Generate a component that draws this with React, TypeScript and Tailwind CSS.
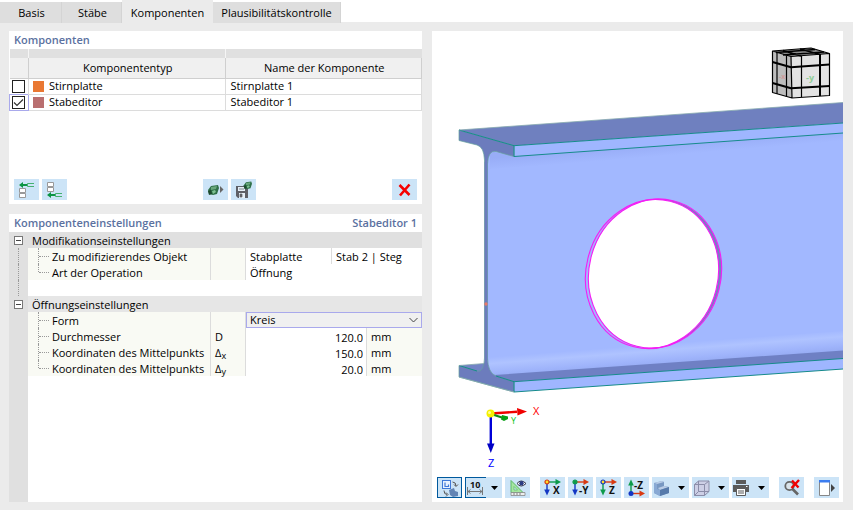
import { useState, type ReactNode } from "react";

type Component = { id: string; type: string; name: string; swatch: string; on: boolean };

const components: Component[] = [
  { id: "stirnplatte", type: "Stirnplatte", name: "Stirnplatte 1", swatch: "bg-[#e97833]", on: false },
  { id: "stabeditor", type: "Stabeditor", name: "Stabeditor 1", swatch: "bg-[#b96f70]", on: true },
];

const tabs = [
  { label: "Basis", width: "w-[62px] pl-0.5" },
  { label: "Stäbe", width: "w-[60px] pl-0.5" },
  { label: "Komponenten", width: "w-[91px]" },
  { label: "Plausibilitätskontrolle", width: "w-32" },
];

function IconButton({ label, children, className = "" }: { label: string; children: ReactNode; className?: string }) {
  return (
    <button
      type="button"
      aria-label={label}
      className={`flex h-[21px] w-[25px] shrink-0 items-center justify-center bg-[#cce4f7] ${className}`}
    >
      {children}
    </button>
  );
}

function MenuButton({ label, children, pressed = false }: { label: string; children: ReactNode; pressed?: boolean }) {
  return (
    <button type="button" aria-label={label} className="flex h-[21px] w-[37px] shrink-0 items-center bg-[#cce4f7]">
      <span className={`flex h-full w-[21px] items-center ${pressed ? "border-y border-l border-[#00599d]" : ""}`}>
        {children}
      </span>
      <svg className="ml-[5px] h-1 w-[7px]" viewBox="0 0 7 4">
        <path d="M0 0h7L3.5 4z" fill="#000" />
      </svg>
    </button>
  );
}

function GreenBlock() {
  return (
    <g>
      <path d="M1 7l3-4 7-1 1 3-2 6-4 1-4-1z" fill="#2f7048" />
      <path d="M4 4l6-1-1 3-5 1z" fill="#69a77c" />
      <path d="M1 8l3-1 1 4-3 1z" fill="#1d4a2e" />
      <path d="M5 8l3-1 1 2-3 2z" fill="#7fc193" />
    </g>
  );
}

function AxisIcon({
  letter,
  down,
  right,
  origin,
  ring,
}: {
  letter: string;
  down: string;
  right: string;
  origin: string;
  ring: string;
}) {
  return (
    <svg className="h-5 w-5 overflow-visible" viewBox="0 0 20 20">
      <path d="M4 4h10" stroke={right} strokeWidth="1.400" />
      <path d="M12.500 1l5.500 3-5.500 3z" fill={right} />
      <path d="M4 4v9" stroke={down} strokeWidth="1.400" />
      <path d="M1.200 11.500h5.600L4 17.500z" fill={down} />
      <circle cx="4" cy="4" r="2" fill={origin} stroke={ring} strokeWidth="1.200" />
      <text x={letter.length > 1 ? 8 : 10} y="15.500" fontSize="10" fontWeight="700" fill="#111">
        {letter}
      </text>
    </svg>
  );
}

function Caret() {
  return (
    <svg className="pointer-events-none col-start-1 row-start-1 mr-1 h-[6px] w-[9px] justify-self-end" viewBox="0 0 9 6">
      <path d="M.5 1l4 4 4-4" fill="none" stroke="#444" />
    </svg>
  );
}

function Branch({ last = false }: { last?: boolean }) {
  return (
    <span className="flex h-4 items-center" aria-hidden="true">
      <span className={`w-px border-l border-dotted border-[#999] ${last ? "h-2 self-start" : "h-4"}`} />
      <span className="w-2.5 border-t border-dotted border-[#999]" />
    </span>
  );
}

function LabelCell({ children, last, htmlFor }: { children: ReactNode; last?: boolean; htmlFor?: string }) {
  return (
    <th scope="row" className="border-r border-[#dcdcdc] bg-[#f9faf4] p-0 text-left font-normal">
      <span className="flex h-4 items-center pl-2.5">
        <Branch last={last} />
        <label htmlFor={htmlFor} className="pt-0.5 pl-[3px] leading-[14px] whitespace-nowrap">
          {children}
        </label>
      </span>
    </th>
  );
}

function TextCell({ children, span = 1, className = "" }: { children?: ReactNode; span?: number; className?: string }) {
  return (
    <td colSpan={span} className={`p-0 pt-0.5 pl-1 leading-[14px] ${className}`}>
      {children}
    </td>
  );
}

function SymbolCell({ children }: { children?: ReactNode }) {
  return <TextCell className="border-r border-[#dcdcdc] bg-[#f9faf4]">{children}</TextCell>;
}

function Section({ title, tone, open, onToggle }: { title: string; tone: string; open: boolean; onToggle: () => void }) {
  return (
    <tr className="h-4">
      <td className="bg-[#e0e0e0] p-0">
        <button
          type="button"
          aria-label={title}
          aria-expanded={open}
          onClick={onToggle}
          className="ml-[5px] flex size-[9px] items-center justify-center border border-[#777] bg-white"
        >
          <span className="h-px w-[5px] bg-[#444]" />
        </button>
      </td>
      <th colSpan={5} scope="colgroup" className={`p-0 pt-0.5 pl-1 text-left leading-[14px] font-normal ${tone}`}>
        {title}
      </th>
    </tr>
  );
}

function Gutter({ line = false }: { line?: boolean }) {
  return (
    <td className="bg-[#e0e0e0] p-0">
      {line && <span className="ml-[9px] block h-4 w-px border-l border-dotted border-[#999]" />}
    </td>
  );
}

function ValueRow({
  id,
  label,
  symbol,
  value,
  last,
}: {
  id: string;
  label: string;
  symbol: ReactNode;
  value: string;
  last?: boolean;
}) {
  return (
    <tr className="h-4">
      <Gutter />
      <LabelCell htmlFor={id} last={last}>
        {label}
      </LabelCell>
      <SymbolCell>{symbol}</SymbolCell>
      <td colSpan={2} className="border-r border-[#dcdcdc] p-0">
        <input
          id={id}
          defaultValue={value}
          className="block h-4 w-full bg-transparent pt-0.5 pr-[3px] text-right leading-[14px] outline-none"
        />
      </td>
      <TextCell className="bg-[#f9faf4]">mm</TextCell>
    </tr>
  );
}

function BeamView() {
  return (
    <svg
      className="block w-full"
      viewBox="432 31 411 442"
      role="img"
      aria-label="Stab mit kreisförmiger Öffnung"
      fontFamily="'Open Sans', 'Liberation Sans', sans-serif"
    >
      <defs>
        <clipPath id="front">
          <ellipse cx="652" cy="274" rx="66" ry="75" transform="rotate(14 652 274)" />
        </clipPath>
        <linearGradient id="fillet" x1="660" y1="344" x2="662" y2="370" gradientUnits="userSpaceOnUse">
          <stop offset="0" stopColor="#a2b8ff" />
          <stop offset=".25" stopColor="#afc3ff" />
          <stop offset=".6" stopColor="#9fb4fb" />
          <stop offset="1" stopColor="#8ea3ec" />
        </linearGradient>
        <linearGradient id="shade" x1="660" y1="144" x2="661" y2="156" gradientUnits="userSpaceOnUse">
          <stop offset="0" stopColor="#98adf7" />
          <stop offset="1" stopColor="#a2b8ff" />
        </linearGradient>
      </defs>

      <path d="M486 149L514 155 843 132V352L505 379 486 374z" fill="#a2b8ff" />
      <path d="M490 151L514 156 843 133V145L490 169z" fill="url(#shade)" />
      <path d="M487 356L843 331V352L497 377 488 372z" fill="url(#fillet)" />
      <path d="M494 375L843 350.500V359L514 382z" fill="#6f80c4" />
      <path d="M514 381.500L843 358.500V369L514 392z" fill="#9fb6ff" />
      <path d="M459 365.500L485 363.500V371L478 372z" fill="#7283c6" />

      <path d="M459 130L843 102.500V123L514 145.700z" fill="#6f80bf" />
      <path d="M514 145.700L843 123V133L514 156.500z" fill="#9fb6ff" />
      <path
        d="M459 130L514 145.700V156.500L496 151.500Q488 150 487.500 164V358Q488 373 496 376L514 381.700V392L459 377V365.500L477 371Q484 373 484.500 358V160Q484 147 477 145L459 140.500z"
        fill="#6c7cbd"
        stroke="#64a09c"
        strokeWidth=".7"
      />
      <path d="M486 162V360" stroke="#6c7cbd" strokeWidth="2.600" />
      <g fill="none" stroke="#168b8b" strokeWidth="1">
        <path d="M459 130L514 145.700 843 123M514 145.700V156.500L843 133" />
        <path d="M459 365.500L477 371M496 376L514 381.700 843 358.500M514 381.700V392L843 369" />
        <path d="M459 130L843 102.500M514 392L459 377M459 365.500L484 363.500" stroke="#87aaae" strokeWidth=".8" />
      </g>
      <circle cx="486" cy="304" r="1.700" fill="#e4796b" />

      <ellipse cx="652" cy="274" rx="66" ry="75" transform="rotate(14 652 274)" fill="#a2b8ff" />
      <ellipse cx="655" cy="273.500" rx="66" ry="75" transform="rotate(14 655 273.500)" fill="#7283c0" />
      <g clipPath="url(#front)">
        <ellipse cx="652" cy="274" rx="66" ry="75" transform="rotate(14 652 274)" fill="#a2b8ff" />
        <ellipse cx="655" cy="273.500" rx="66" ry="75" transform="rotate(14 655 273.500)" fill="#fff" />
      </g>
      <g fill="none" stroke="#f51df5" strokeWidth="1.100">
        <ellipse cx="652" cy="274" rx="66" ry="75" transform="rotate(14 652 274)" />
        <ellipse cx="655" cy="273.500" rx="66" ry="75" transform="rotate(14 655 273.500)" />
      </g>

      <g strokeLinejoin="round">
        <path d="M772.500 51L791 56.500 792 98 772.500 92.500z" fill="#bdbdbd" />
        <path d="M791 56.500L829.500 53.500V95.500L792 98z" fill="#e3e3e3" />
        <path d="M772.500 51L811 48 829.500 53.500 791 56.500z" fill="#8c8c8c" />
        <path
          d="M772.500 51L791 56.500 829.500 53.500 811 48zM791 56.500L792 98 829.500 95.500V53.500M772.500 51V92.500L792 98"
          fill="none"
          stroke="#000"
          strokeWidth="1.200"
        />
        <path d="M772.500 62L791 67.300 829.500 64.500M772.500 83L791 88.300 829.500 86" fill="none" stroke="#000" strokeWidth="2" />
        <path d="M777 52.500V94M786.500 55.500V97M801.500 56v41" fill="none" stroke="#000" strokeWidth="1.200" />
        <path d="M820 54v42" stroke="#000" strokeWidth="2" />
        <path
          d="M776 52.500L815 49.500M783 55L824 52M783 50.500L801 56M800 49L820 54.500"
          fill="none"
          stroke="#000"
          strokeWidth="1.600"
        />
      </g>
      <text x="806" y="81" fontSize="9" fontWeight="700" fill="#8fcf97">-y</text>
      <text x="779" y="79" fontSize="7" fontWeight="700" fill="#cf9c9c">-x</text>

      <path d="M491 413.500L517 411.800" stroke="#f00000" strokeWidth="2.400" />
      <path d="M517 408L527 411.500 517.500 415.500z" fill="#f00000" />
      <path d="M491 414L502 417.500" stroke="#0a8f14" strokeWidth="2.200" />
      <path d="M502 415l6 1.500v2.500l-4 2-3-1.500z" fill="#09a016" />
      <path d="M490.800 414V444" stroke="#0000d8" strokeWidth="2.400" />
      <path d="M487 443.500h7.500L490.800 453z" fill="#0000c4" />
      <circle cx="490.500" cy="413.500" r="4" fill="#f5f000" />
      <circle cx="489.500" cy="412.500" r="1.500" fill="#ffff91" />
      <text x="533" y="415" fontSize="11" fill="#f00">X</text>
      <text x="511" y="424" fontSize="9" fill="#0cc41c">Y</text>
      <text x="488" y="467" fontSize="11" fill="#00f">Z</text>
    </svg>
  );
}

function ViewToolbar() {
  return (
    <div role="toolbar" aria-label="Ansicht" className="flex gap-2.5 px-[5px] pb-1">
      <div className="flex gap-[3px]">
        <IconButton label="Ansicht wechseln" className="border border-[#00599d]">
          <svg className="size-[18px]" viewBox="0 0 18 18">
            <rect x="1.500" y="1.500" width="8" height="8" fill="#e8f1ff" stroke="#3f78d8" />
            <path d="M4 3.500v4h3.500v-2" fill="none" stroke="#3f78d8" strokeWidth="1.200" />
            <path d="M11.500 3q3.500 0 3.500 4M13 5.500l2 2 2-2M3 11.500q0 4 3 4M5 13.500l2 2-2 2" fill="none" stroke="#555" />
            <path d="M8 11l5-2 1 3 3 1v4l-5 1-3-2z" fill="#6284b4" />
          </svg>
        </IconButton>
        <MenuButton label="Bemaßung" pressed>
          <svg className="h-[18px] w-[18px] overflow-visible" viewBox="0 0 18 18">
            <text x="4" y="9" fontSize="9" fontWeight="700" fill="#111">10</text>
            <path
              d="M1.500 8v8M16.500 8v8M2 12.500h14M4.500 10.500l-2.500 2 2.500 2M13.500 10.500l2.500 2-2.500 2"
              fill="none"
              stroke="#777"
            />
          </svg>
        </MenuButton>
        <IconButton label="Hilfslinien anzeigen">
          <svg className="size-[18px]" viewBox="0 0 18 18">
            <path d="M2 1.500V13.500H14z" fill="#a5e6a0" stroke="#5cb868" />
            <path d="M5 7.500V11H8.500z" fill="#cce4f7" stroke="#5cb868" strokeWidth=".7" />
            <path d="M2 13.500h14v3H2z" fill="#eee" stroke="#888" strokeWidth=".8" />
            <path d="M5 14v2M8 14v2M11 14v2" stroke="#666" strokeWidth=".8" />
            <path d="M8 4.500q4-5 9 0-5 5-9 0z" fill="#fff" stroke="#334" />
            <circle cx="12.500" cy="4.300" r="2.200" fill="#2a3c82" />
          </svg>
        </IconButton>
      </div>
      <div className="flex gap-[3px]">
        <IconButton label="Ansicht in X">
          <AxisIcon letter="X" right="#0c9a4a" down="#1236c4" origin="#ffde26" ring="#d93a12" />
        </IconButton>
        <IconButton label="Ansicht in -Y">
          <AxisIcon letter="-Y" right="#d93a12" down="#1236c4" origin="#0c9a4a" ring="#0c9a4a" />
        </IconButton>
        <IconButton label="Ansicht in Z">
          <AxisIcon letter="Z" right="#d93a12" down="#0c9a4a" origin="#ffde26" ring="#1236c4" />
        </IconButton>
        <IconButton label="Ansicht in -Z">
          <svg className="h-5 w-5 overflow-visible" viewBox="0 0 20 20">
            <path d="M4 15V6" stroke="#0c9a4a" strokeWidth="1.400" />
            <path d="M1.200 7.500h5.600L4 1.500z" fill="#0c9a4a" />
            <path d="M4 15.500h10" stroke="#d93a12" strokeWidth="1.400" />
            <path d="M12.500 12.500l5.500 3-5.500 3z" fill="#d93a12" />
            <circle cx="4" cy="15.500" r="2.500" fill="#1236c4" />
            <text x="7" y="11" fontSize="10" fontWeight="700" fill="#111">-Z</text>
          </svg>
        </IconButton>
        <MenuButton label="Darstellung">
          <svg className="h-[18px] w-[18px]" viewBox="0 0 18 18">
            <path d="M2 4l8-2 2 1v4l5 1v6l-9 3-6-3z" fill="#7898c2" />
            <path d="M2 4l8-2 2 1-7 2zM6 9l6-2 5 1-9 3z" fill="#b9cce6" />
            <path d="M2 4l3 1v5l3 1v6l-6-3z" fill="#89a9d4" />
            <path d="M8 11l9-3v6l-9 3z" fill="#567aab" />
          </svg>
        </MenuButton>
        <MenuButton label="Transparenz">
          <svg className="h-[18px] w-[18px]" viewBox="0 0 18 18">
            <path d="M2 5l5-3h10v10l-4 4H2z" fill="#cdcfe6" />
            <path
              d="M2.500 5.500h10v11h-10zM2.500 5.500l4-3.500h10.500l-4.500 3.500M17 2V12.500l-4.500 4M6.500 2v10.500H17M6.500 12.500l-4 4"
              fill="none"
              stroke="#8b8da9"
            />
          </svg>
        </MenuButton>
        <MenuButton label="Drucken">
          <svg className="h-[18px] w-[18px]" viewBox="0 0 18 18">
            <path d="M4 1h10v4H4zM1 6h16v7h-3v-3H4v3H1z" fill="#5b5b5b" />
            <path d="M4.500 9.500h9v7h-9z" fill="#fff" stroke="#5b5b5b" />
            <path d="M6 12h6M6 14h6" stroke="#5b5b5b" />
            <path d="M14 7.500h1.500" stroke="#fff" />
          </svg>
        </MenuButton>
      </div>
      <IconButton label="Auswahl aufheben">
        <svg className="size-[18px]" viewBox="0 0 18 18">
          <circle cx="6.500" cy="7" r="4.200" fill="#d9e3ea" stroke="#666" strokeWidth="1.800" />
          <path d="M9.500 10l5.500 5.500" stroke="#666" strokeWidth="2.600" />
          <path d="M9 1.500l6.500 7M16 1L8.500 9" stroke="#f00000" strokeWidth="2.400" />
        </svg>
      </IconButton>
      <IconButton label="Bereich einblenden">
        <svg className="h-[18px] w-[18px]" viewBox="0 0 18 18">
          <path d="M1.500 1.500h10v15h-10z" fill="#fff" stroke="#888" />
          <path d="M1 1h11v2.500H1z" fill="#3c7df0" />
          <path d="M13 5l4 4-4 4z" fill="#444" />
        </svg>
      </IconButton>
    </div>
  );
}

export default function App() {
  const [active, setActive] = useState("Komponenten");
  const [modOpen, setModOpen] = useState(true);
  const [holeOpen, setHoleOpen] = useState(true);

  return (
    <div className="flex min-h-screen flex-col bg-[#ebebeb] font-['Open_Sans','Noto_Sans',sans-serif] text-[11px] leading-4 text-black">
      <div role="tablist" className="flex h-[22px] items-start bg-white">
        {tabs.map((tab) => (
          <button
            key={tab.label}
            type="button"
            role="tab"
            aria-selected={active === tab.label}
            onClick={() => setActive(tab.label)}
            className={`whitespace-nowrap ${tab.width} ${
              active === tab.label
                ? "h-[23px] bg-[#ebebeb] pt-0.5"
                : "mt-0.5 h-[21px] border-r border-[#d4d4d4] bg-[#dedede]"
            }`}
          >
            {tab.label}
          </button>
        ))}
      </div>

      <div className="grid flex-1 grid-cols-[413fr_411fr] gap-2.5 pt-[9px] pr-2.5 pb-2 pl-[9px]">
        <div className="flex min-w-0 flex-col gap-2.5">
          <section className="flex min-h-[173px] flex-col bg-white">
            <h2 className="h-[18px] px-[5px] pt-px font-semibold text-[#5b719f]">Komponenten</h2>
            <table className="w-full table-fixed border-collapse">
              <colgroup>
                <col className="w-[19px]" />
                <col />
                <col />
              </colgroup>
              <thead>
                <tr className="h-[9px] bg-[#e0e0e0]">
                  <td className="border-r border-[#f5f5f5] p-0" />
                  <td className="border-r border-[#f5f5f5] p-0" />
                  <td className="p-0" />
                </tr>
                <tr className="h-5 border-b border-[#cfcfcf] bg-[#f0f0f0]">
                  <th aria-label="Aktiv" className="border-r border-[#cfcfcf] p-0" />
                  <th className="border-r border-[#cfcfcf] p-0 pl-0.5 font-normal">Komponententyp</th>
                  <th className="border-r border-[#cfcfcf] p-0 pl-0.5 font-normal">Name der Komponente</th>
                </tr>
              </thead>
              <tbody>
                {components.map((row) => (
                  <tr key={row.id} className="h-4 border-b border-[#dcdcdc]">
                    <td className={`p-0 ${row.on ? "border border-[#a9a9ec]" : "border-r border-[#dcdcdc]"}`}>
                      <span className="ml-0.5 grid size-[13px] items-center">
                        <input
                          type="checkbox"
                          id={row.id}
                          defaultChecked={row.on}
                          className="peer col-start-1 row-start-1 m-0 size-[13px] appearance-none border border-[#222] bg-white"
                        />
                        <svg
                          className="pointer-events-none col-start-1 row-start-1 hidden size-[13px] peer-checked:block"
                          viewBox="0 0 13 13"
                        >
                          <path d="M2 6.500l3 3 6-6" fill="none" stroke="#333" strokeWidth="1.200" />
                        </svg>
                      </span>
                    </td>
                    <td className="border-r border-[#dcdcdc] p-0">
                      <label htmlFor={row.id} className="flex h-[15px] items-center gap-[5px] pl-1">
                        <span className={`size-[11px] ${row.swatch}`} />
                        {row.type}
                      </label>
                    </td>
                    <td className="border-r border-[#dcdcdc] p-0">
                      <span className="flex h-[15px] items-center pl-[5px]">{row.name}</span>
                    </td>
                  </tr>
                ))}
              </tbody>
            </table>
            <div
              role="toolbar"
              aria-label="Komponenten bearbeiten"
              className="mt-auto flex items-center justify-between px-[5px] pb-1"
            >
              <div className="flex gap-[3px]">
                <IconButton label="Oben einfügen">
                  <svg className="size-[18px]" viewBox="0 0 18 18">
                    <path d="M1 4l4-3v2h4v2H5v2z" fill="#0b9444" />
                    <path d="M16 2.500H9.500v3H16" fill="none" stroke="#45b071" />
                    <path d="M1.500 7.500h6v4h-6zM1.500 12.500h6v4h-6z" fill="#fff" stroke="#999" />
                  </svg>
                </IconButton>
                <IconButton label="Unten einfügen">
                  <svg className="size-[18px]" viewBox="0 0 18 18">
                    <path d="M1.500 1.500h6v4h-6zM1.500 6.500h6v4h-6z" fill="#fff" stroke="#999" />
                    <path d="M1 14l4-3v2h4v2H5v2z" fill="#0b9444" />
                    <path d="M16 12.500H9.500v3H16" fill="none" stroke="#45b071" />
                  </svg>
                </IconButton>
              </div>
              <div className="flex gap-[3px]">
                <IconButton label="Bibliothek">
                  <svg className="size-[18px]" viewBox="0 0 18 18">
                    <g transform="translate(0 2)">
                      <GreenBlock />
                    </g>
                    <path d="M13 5l3.500 3.500L13 12z" fill="#666" />
                  </svg>
                </IconButton>
                <IconButton label="Speichern">
                  <svg className="size-[18px]" viewBox="0 0 18 18">
                    <path d="M1 5h12v12H3l-2-2z" fill="#5d5f66" />
                    <path d="M3 6h7v4H3zM4 12h6v5H4z" fill="#e4eef6" />
                    <path d="M5 13h2v3H5zM4 8h5" fill="#5d5f66" stroke="#5d5f66" strokeWidth=".7" />
                    <g transform="translate(8 -1) scale(.75)">
                      <GreenBlock />
                    </g>
                  </svg>
                </IconButton>
              </div>
              <IconButton label="Löschen">
                <svg className="size-[18px]" viewBox="0 0 18 18">
                  <path d="M3.500 4l10 10M13.500 3.500L4 14.500" stroke="#f60000" strokeWidth="2.600" />
                </svg>
              </IconButton>
            </div>
          </section>

          <section className="flex flex-1 flex-col bg-white">
            <div className="flex h-[18px] justify-between px-[5px] pt-px font-semibold text-[#5b719f]">
              <h2>Komponenteneinstellungen</h2>
              <span>Stabeditor 1</span>
            </div>
            <table className="w-full table-fixed border-separate border-spacing-0">
              <colgroup>
                <col className="w-[19px]" />
                <col className="w-[183px]" />
                <col className="w-[35px]" />
                <col className="w-[86px]" />
                <col className="w-[35px]" />
                <col />
              </colgroup>
              <tbody>
                <Section
                  title="Modifikationseinstellungen"
                  tone="bg-[#e0e0e0]"
                  open={modOpen}
                  onToggle={() => setModOpen(!modOpen)}
                />
                {modOpen && (
                  <>
                    <tr className="h-4">
                      <Gutter line />
                      <LabelCell>Zu modifizierendes Objekt</LabelCell>
                      <SymbolCell />
                      <TextCell className="border-r border-[#dcdcdc]">Stabplatte</TextCell>
                      <TextCell span={2}>Stab 2 | Steg</TextCell>
                    </tr>
                    <tr className="h-4">
                      <Gutter line />
                      <LabelCell last>Art der Operation</LabelCell>
                      <SymbolCell />
                      <TextCell span={3}>Öffnung</TextCell>
                    </tr>
                  </>
                )}
                <tr className="h-4">
                  <Gutter line />
                  <td colSpan={5} className="p-0" />
                </tr>
                <Section
                  title="Öffnungseinstellungen"
                  tone="bg-[#e6e6e6]"
                  open={holeOpen}
                  onToggle={() => setHoleOpen(!holeOpen)}
                />
                {holeOpen && (
                  <>
                    <tr className="h-4">
                      <Gutter />
                      <LabelCell htmlFor="form">Form</LabelCell>
                      <SymbolCell />
                      <td colSpan={3} className="p-0">
                        <span className="grid items-center">
                          <select
                            id="form"
                            className="col-start-1 row-start-1 h-4 w-full appearance-none border border-[#a9a9ec] bg-[#f0f0f0] pl-[3px] leading-[14px] outline-none"
                          >
                            <option>Kreis</option>
                          </select>
                          <Caret />
                        </span>
                      </td>
                    </tr>
                    <ValueRow id="durchmesser" label="Durchmesser" symbol="D" value="120.0" />
                    <ValueRow
                      id="mitte-x"
                      label="Koordinaten des Mittelpunkts"
                      symbol={
                        <>
                          Δ<sub className="text-[9px]">x</sub>
                        </>
                      }
                      value="150.0"
                    />
                    <ValueRow
                      id="mitte-y"
                      label="Koordinaten des Mittelpunkts"
                      symbol={
                        <>
                          Δ<sub className="text-[9px]">y</sub>
                        </>
                      }
                      value="20.0"
                      last
                    />
                  </>
                )}
              </tbody>
            </table>
            <div className="w-[19px] flex-1 bg-[#e0e0e0]" />
          </section>
        </div>

        <section className="flex min-w-0 flex-col justify-between bg-white">
          <BeamView />
          <ViewToolbar />
        </section>
      </div>
    </div>
  );
}
